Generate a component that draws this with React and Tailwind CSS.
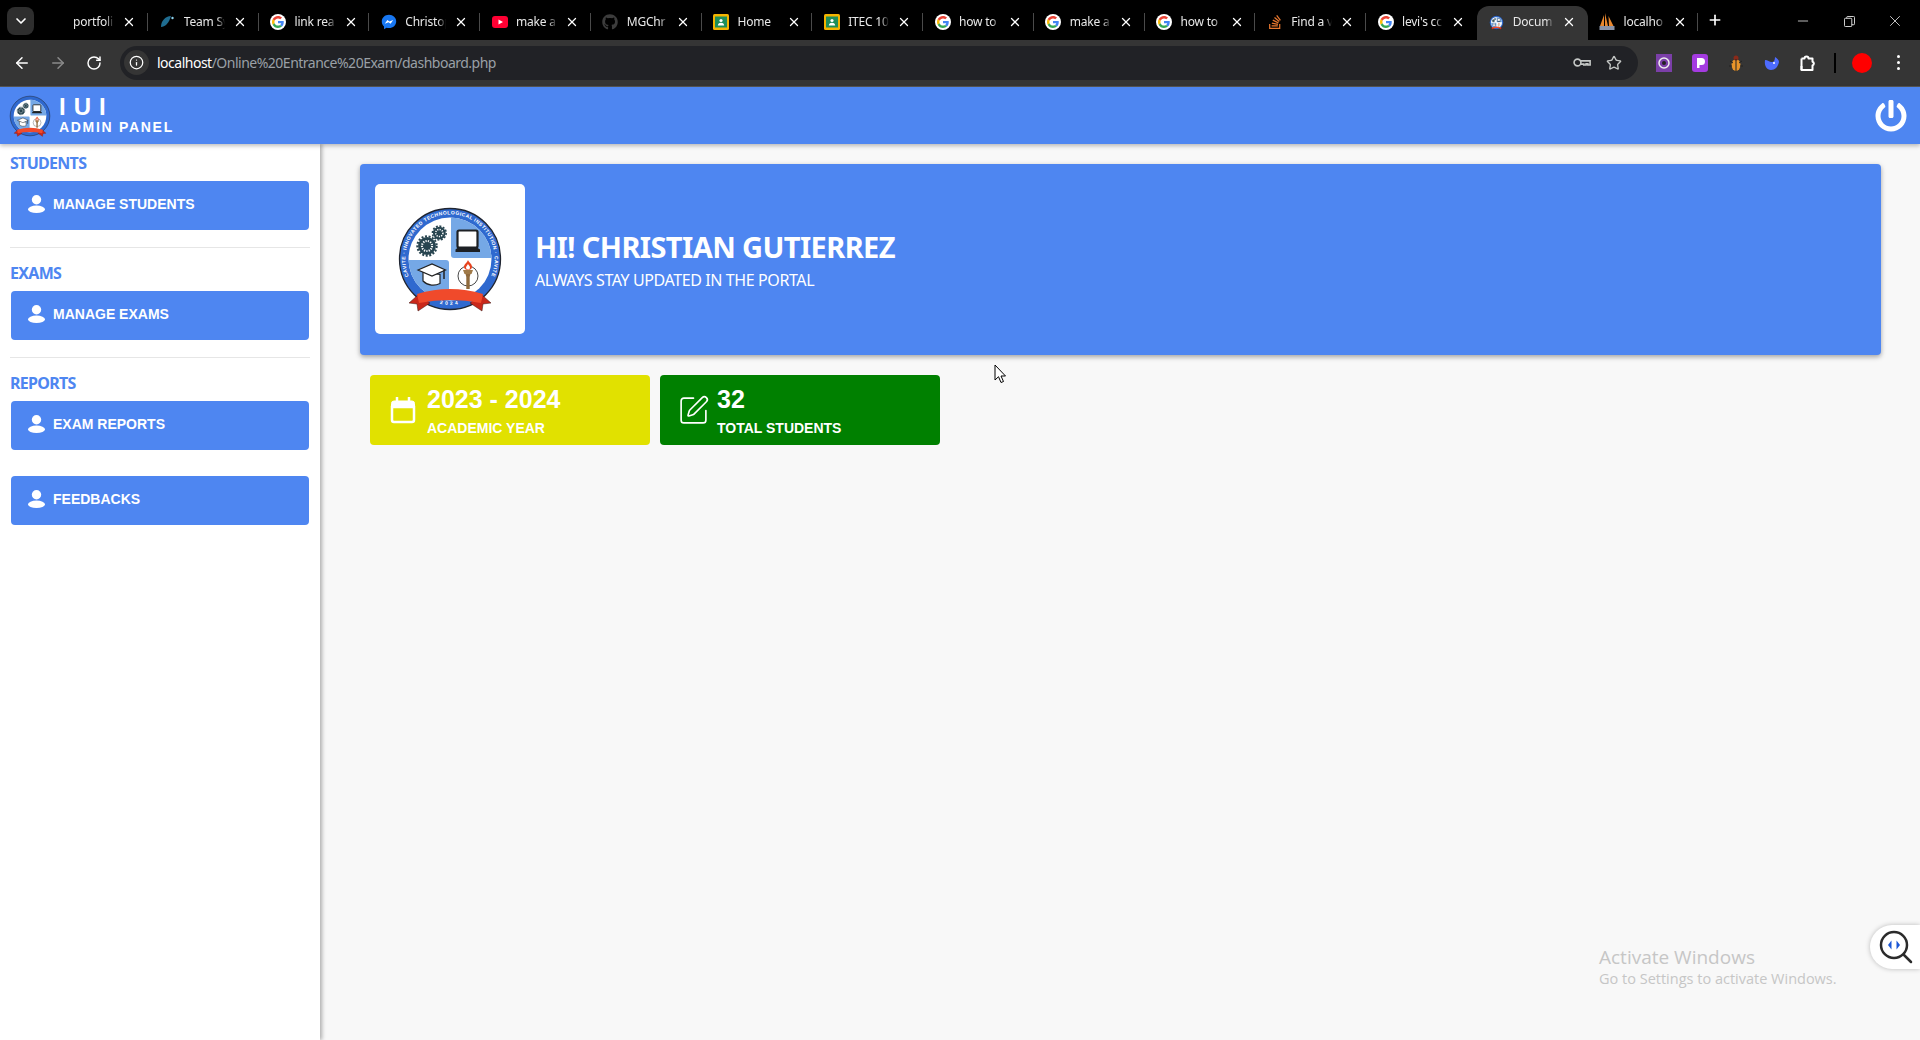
import { FaGithub, FaPowerOff, FaStackOverflow } from 'react-icons/fa';
import { ArrowLeft, ArrowRight, RotateCw, Info, Star, ChevronDown, X, Plus, Minus, SquarePen } from 'lucide-react';

const BLUE = 'bg-[#4e86f1]';

function GoogleIcon() {
  return (
    <span className="w-4 h-4 rounded-full bg-white flex items-center justify-center shrink-0">
      <svg viewBox="0 0 48 48" className="w-3 h-3">
        <path fill="#EA4335" d="M24 9.5c3.54 0 6.71 1.22 9.21 3.6l6.85-6.85C35.9 2.38 30.47 0 24 0 14.62 0 6.51 5.38 2.56 13.22l7.98 6.19C12.43 13.72 17.74 9.5 24 9.5z" />
        <path fill="#4285F4" d="M46.98 24.55c0-1.57-.15-3.09-.38-4.55H24v9.02h12.94c-.58 2.96-2.26 5.48-4.78 7.18l7.73 6c4.51-4.18 7.09-10.36 7.09-17.65z" />
        <path fill="#FBBC05" d="M10.53 28.59c-.48-1.45-.76-2.99-.76-4.59s.27-3.14.76-4.59l-7.98-6.19C.92 16.46 0 20.12 0 24c0 3.88.92 7.54 2.56 10.78l7.97-6.19z" />
        <path fill="#34A853" d="M24 48c6.48 0 11.93-2.13 15.89-5.81l-7.73-6c-2.15 1.45-4.92 2.3-8.16 2.3-6.26 0-11.57-4.22-13.47-9.91l-7.98 6.19C6.51 42.62 14.62 48 24 48z" />
      </svg>
    </span>
  );
}

function ClassroomIcon() {
  return (
    <svg viewBox="0 0 16 16" className="w-4 h-4 shrink-0">
      <rect width="16" height="16" rx="1.5" fill="#f4b400" />
      <rect x="2" y="2.5" width="12" height="11" fill="#1e8e5a" />
      <circle cx="8" cy="6.5" r="1.6" fill="#fff" />
      <path d="M4.8 11.5c.3-2 1.6-2.7 3.2-2.7s2.9.7 3.2 2.7z" fill="#fff" />
    </svg>
  );
}

function TabIcon({ type }) {
  if (type === 'google') return <GoogleIcon />;
  if (type === 'classroom') return <ClassroomIcon />;
  if (type === 'github') return <FaGithub className="w-4 h-4 shrink-0 text-[#3c3c3c]" />;
  if (type === 'stack') return <FaStackOverflow className="w-4 h-4 shrink-0 text-[#e8772e]" />;
  if (type === 'messenger')
    return (
      <svg viewBox="0 0 16 16" className="w-4 h-4 shrink-0">
        <path d="M8 .8C3.9.8.8 3.7.8 7.5c0 2 .8 3.7 2.2 4.9v2.8l2.5-1.4c.8.2 1.6.3 2.5.3 4.1 0 7.2-2.9 7.2-6.6S12.1.8 8 .8z" fill="#1877f2" />
        <path d="M3.8 9.7 6.4 6l2 1.6L12.200 6 9.600 9.800 7.600 8.200z" fill="#fff" />
      </svg>
    );
  if (type === 'youtube')
    return (
      <svg viewBox="0 0 16 16" className="w-4 h-4 shrink-0">
        <rect y="2" width="16" height="12" rx="3" fill="#ff0033" />
        <path d="M6.500 5.400v5.200L11 8z" fill="#fff" />
      </svg>
    );
  if (type === 'swoosh')
    return (
      <svg viewBox="0 0 16 16" className="w-4 h-4 shrink-0">
        <path d="M2 13C2 7 6 2.500 12 2c-1 3-2 6-4.500 8.500C6 12 4 13 2 13z" fill="#1f6c90" />
        <circle cx="13.500" cy="4" r="1.200" fill="#8fd3ee" />
      </svg>
    );
  if (type === 'logo')
    return (
      <span className="w-4 h-4 flex items-center justify-center shrink-0">
        <Logo size={15} small id="tab-logo" />
      </span>
    );
  if (type === 'sails')
    return (
      <svg viewBox="0 0 18 18" className="w-[18px] h-[18px] shrink-0">
        <path d="M2 13 6 2v11zM7 13V0l3 13zM11 13 10.500 3l5 10z" fill="#e8872e" />
        <rect x="1.500" y="13" width="15" height="4" fill="#8a93a8" />
      </svg>
    );
  return <span className="w-4 h-4 shrink-0" />;
}

const tabs = [
  { title: 'portfoli', icon: 'none' },
  { title: 'Team Sy', icon: 'swoosh' },
  { title: 'link rea', icon: 'google' },
  { title: 'Christop', icon: 'messenger' },
  { title: 'make a', icon: 'youtube' },
  { title: 'MGChr', icon: 'github' },
  { title: 'Home', icon: 'classroom' },
  { title: 'ITEC 10', icon: 'classroom' },
  { title: 'how to', icon: 'google' },
  { title: 'make a', icon: 'google' },
  { title: 'how to', icon: 'google' },
  { title: 'Find a v', icon: 'stack' },
  { title: "levi's cc", icon: 'google' },
  { title: 'Docum', icon: 'logo', active: true },
  { title: 'localho', icon: 'sails' },
];

function TabBar() {
  return (
    <div className="h-10 bg-black flex items-start shrink-0 relative">
      <div className="w-[27px] h-7 ml-[7px] mt-[7px] rounded-lg bg-[#2e2e2e] flex items-center justify-center shrink-0">
        <ChevronDown className="w-4 h-4 text-white" strokeWidth={2.5} />
      </div>
      <div className="flex ml-[3px]">
        {tabs.map((tab, i) => (
          <div
            key={i}
            className={`w-[110.750px] h-[34px] mt-[6px] flex items-center pl-[11px] pb-[2px] relative ${
              tab.active ? 'bg-[#353535] rounded-t-xl' : ''
            }`}
          >
            <div className="w-[17px] flex justify-center shrink-0">
              <TabIcon type={tab.icon} />
            </div>
            <span className="ml-[8px] w-[41px] whitespace-nowrap text-xs text-[#e8e8e8] font-['Noto_Sans',sans-serif] tracking-[-0.2px] [mask-image:linear-gradient(to_right,black_80%,transparent)]">
              {tab.title}
            </span>
            <X className="w-[14px] h-[14px] text-white ml-[8px] shrink-0" strokeWidth={2.200} />
            {!tab.active && i !== 12 && <span className="absolute right-0 top-[7px] h-[18px] w-px bg-[#4a4a4a]" />}
          </div>
        ))}
      </div>
      <Plus className="w-4 h-4 text-white mt-[12px] ml-[9px] shrink-0" strokeWidth={2.500} />
      <div className="flex items-center ml-auto mt-[12px] text-[#e8e8e8]">
        <Minus className="w-4 h-4 mr-[33px]" strokeWidth={1.200} />
        <svg viewBox="0 0 12 12" className="w-[11px] h-[11px] mr-[31px]" fill="none" stroke="currentColor">
          <rect x="0.500" y="2.500" width="8" height="9" rx="1" />
          <path d="M3 2.500V1.500a1 1 0 0 1 1-1h6.500a1 1 0 0 1 1 1v7a1 1 0 0 1-1 1H8.500" />
        </svg>
        <X className="w-[18px] h-[18px] mr-[16px]" strokeWidth={1.100} />
      </div>
    </div>
  );
}

function Toolbar() {
  return (
    <div className="h-[47px] bg-[#353535] border-b border-[#555] flex items-center shrink-0 pb-[1px]">
      <div className="w-[120px] flex items-center shrink-0">
        <ArrowLeft className="w-[18px] h-[18px] ml-[13px] text-white" strokeWidth={2} />
        <ArrowRight className="w-[18px] h-[18px] ml-[18px] text-[#8a8a8a]" strokeWidth={2} />
        <RotateCw className="w-4 h-4 ml-[19px] text-white" strokeWidth={2.200} />
      </div>
      <div className="w-[1518px] h-[34px] rounded-full bg-[#212226] flex items-center shrink-0">
        <div className="w-[25px] h-[25px] ml-1 rounded-full bg-[#353535] flex items-center justify-center shrink-0">
          <Info className="w-[15px] h-[15px] text-white" strokeWidth={2} />
        </div>
        <span className="ml-2 text-sm text-[#9aa0a6] font-['Noto_Sans',sans-serif] tracking-[-0.500px] whitespace-nowrap">
          <span className="text-white">localhost</span>/Online%20Entrance%20Exam/dashboard.php
        </span>
        <svg viewBox="0 0 20 14" className="w-[18px] h-[13px] ml-auto mr-[15px]" fill="none" stroke="#c4c7c5" strokeWidth="1.800">
          <circle cx="5" cy="7" r="3.800" />
          <path d="M8.800 5.200H19v4.600h-2.500V8.500h-2v1.300H12V8.800H8.800" />
        </svg>
        <Star className="w-4 h-4 mr-[16px] text-[#c4c7c5]" strokeWidth={2} />
      </div>
      <div className="flex items-center ml-[18px]">
        <svg viewBox="0 0 16 18" className="w-4 h-[18px]">
          <rect width="16" height="18" fill="#7b3fa8" />
          <circle cx="8" cy="9" r="5" fill="none" stroke="#eee" strokeWidth="1.500" />
          <circle cx="8" cy="9" r="2" fill="#222" />
        </svg>
        <svg viewBox="0 0 16 18" className="w-4 h-[18px] ml-5">
          <rect width="16" height="18" rx="3" fill="#a43be0" />
          <path d="M5 4h4.500a3.500 3.500 0 0 1 0 7H7.500v3H5z" fill="#fff" />
        </svg>
        <svg viewBox="0 0 16 18" className="w-4 h-[18px] ml-5">
          <ellipse cx="8" cy="11" rx="4.500" ry="6" fill="#e8942a" />
          <circle cx="8" cy="4" r="2.500" fill="#8a2a1a" />
          <path d="M8 5v12M2 7l3 2M14 7l-3 2M1 12h3M15 12h-3" stroke="#222" strokeWidth="1" />
        </svg>
        <svg viewBox="0 0 16 18" className="w-4 h-[18px] ml-5">
          <path d="M1 6c3 0 4 2 7 2 2 0 3-2 3-5 2 1 4 3 4 5-1 5-4 8-8 8-4 0-7-4-6-10z" fill="#4d6bfe" />
          <circle cx="10" cy="9" r="1" fill="#fff" />
        </svg>
        <svg viewBox="0 0 18 18" className="w-[18px] h-[18px] ml-[19px]" fill="none" stroke="#fff" strokeWidth="2" strokeLinejoin="round">
          <path d="M2.500 4.500h3a2 2 0 0 1 4 0h4v3.200a2 2 0 0 1 0 3.800v4.500h-11v-4" />
          <path d="M2.500 4.500v11.500" />
        </svg>
        <span className="w-[2px] h-5 bg-black ml-[17px]" />
        <span className="w-5 h-5 rounded-full bg-[#ff0000] ml-4" />
        <span className="flex flex-col gap-[3px] ml-[25px]">
          <span className="w-[3px] h-[3px] rounded-full bg-white" />
          <span className="w-[3px] h-[3px] rounded-full bg-white" />
          <span className="w-[3px] h-[3px] rounded-full bg-white" />
        </span>
      </div>
    </div>
  );
}

function Gear({ x, y, r }) {
  return (
    <g>
      <circle cx={x} cy={y} r={r * 0.85} fill="#27444f" />
      <circle cx={x} cy={y} r={r * 0.92} fill="none" stroke="#27444f" strokeWidth={r * 0.2} strokeDasharray="2 1.600" />
      <circle cx={x} cy={y} r={r * 0.48} fill="none" stroke="#fff" strokeWidth={r * 0.2} strokeDasharray="1.200 1.200" />
    </g>
  );
}

// school seal, small = no lettering for the header and tab versions
function Logo({ size, small, id }) {
  return (
    <svg viewBox="-56 -56 112 112" width={size} height={size} className="shrink-0">
      <defs>
        <clipPath id={`${id}-clip`}>
          <circle r="41.500" />
        </clipPath>
        <path id={`${id}-arc`} d="M -37 25 A 44.650 44.650 0 1 1 37 25" />
        <path id={`${id}-low`} d="M -25 38.500 A 46 46 0 0 0 25 38.500" />
      </defs>
      <circle r="50.500" fill="#2f69cf" stroke="#1f2430" strokeWidth="1.300" />
      {!small && (
        <text fill="#fff" fontSize="5" fontWeight="700" letterSpacing="0.450" fontFamily="'Liberation Sans', sans-serif">
          <textPath href={`#${id}-arc`} startOffset="50%" textAnchor="middle">
            CAVITE · INNOVATED  TECHNOLOGICAL  INSTITUTION · CAVITE
          </textPath>
        </text>
      )}
      <circle r="41.500" fill="#fff" />
      <g clipPath={`url(#${id}-clip)`}>
        <rect x="1" y="-43" width="43" height="42" rx="3" fill="#75a8e6" />
        <rect x="-44" y="1" width="43" height="43" rx="3" fill="#75a8e6" />
      </g>
      <Gear x={-23} y={-13} r={10.500} />
      <Gear x={-10.700} y={-26} r={7.500} />
      <rect x="7.500" y="-28.500" width="20" height="17" rx="1.500" fill="#fff" stroke="#1d2024" strokeWidth="2.200" />
      <path d="M5.500 -9.500 8 -11.500h19l3 2v2.500H5.500z" fill="#1d2024" />
      <path d="M-27 13v9c5 5 12 5 17 2.500v-9z" fill="#fff" stroke="#222" strokeWidth="1.200" />
      <path d="M-32 11-18 5-4.500 11-18 17z" fill="#fff" stroke="#222" strokeWidth="1.200" />
      <path d="M-6 11v9" stroke="#222" strokeWidth="1.500" />
      <circle cx="18" cy="17" r="10" fill="none" stroke="#333" strokeWidth="0.900" />
      <path d="M15.500 15h5l-.8 3v12h-3.400V18z" fill="#8f6a3c" />
      <path d="M13 11h10l-1.500 4h-7z" fill="#a07a48" />
      <path d="M18 1c1 2.500 4 3.500 4 7 0 2-2 3-4 3s-4-1-4-3c0-3 3-4 4-7z" fill="#e8431f" />
      <path d="M18 5c.8 1.500 2 2 2 3.500S19 10.500 18 10.500 16 9.500 16 8.500 17.200 6.500 18 5z" fill="#fff" />
      {!small && (
        <text fill="#fff" fontSize="5" fontWeight="700" letterSpacing="2.300" fontFamily="'Liberation Sans', sans-serif">
          <textPath href={`#${id}-low`} startOffset="50%" textAnchor="middle">
            2024
          </textPath>
        </text>
      )}
      <path d="M-32 36-41 44-33 45-32 52-20 44z" fill="#c9281a" stroke="#3a1410" strokeWidth="0.500" />
      <path d="M32 36 41 44 33 45 32 52 20 44z" fill="#c9281a" stroke="#3a1410" strokeWidth="0.500" />
      <path d="M-33 35Q0 25 33 35L31 44Q0 38-31 44z" fill="#f04a2b" />
    </svg>
  );
}

function UserIcon() {
  return (
    <svg viewBox="0 0 17 18" className="w-[17px] h-[18px] shrink-0" fill="#fff">
      <circle cx="8.500" cy="4.700" r="4.700" />
      <ellipse cx="8.500" cy="14.300" rx="8.500" ry="3.700" />
    </svg>
  );
}

function SideButton({ label, className = '' }) {
  return (
    <button className={`w-[298px] h-[49px] ${BLUE} rounded-[4px] flex items-center pl-[17px] pb-[4px] text-left ${className}`}>
      <UserIcon />
      <span className="ml-2 text-white text-sm font-bold font-['Liberation_Sans',sans-serif] whitespace-nowrap">{label}</span>
    </button>
  );
}

function SideHeading({ children, className = '' }) {
  return (
    <h3 className={`h-[23px] leading-[22px] mb-[6px] -ml-px text-[#4e86f1] text-base font-bold font-['Noto_Sans',sans-serif] tracking-[-0.700px] ${className}`}>
      {children}
    </h3>
  );
}

function Sidebar() {
  return (
    <aside className="w-[320px] shrink-0 bg-white pt-2 px-[11px] shadow-[2px_0_4px_rgba(0,0,0,0.3)] z-10">
      <SideHeading>STUDENTS</SideHeading>
      <SideButton label="MANAGE STUDENTS" />
      <hr className="mt-[17px] mb-[14px] -ml-px w-[300px] border-t border-[#e6e6e6]" />
      <SideHeading>EXAMS</SideHeading>
      <SideButton label="MANAGE EXAMS" />
      <hr className="mt-[17px] mb-[14px] -ml-px w-[300px] border-t border-[#e6e6e6]" />
      <SideHeading>REPORTS</SideHeading>
      <SideButton label="EXAM REPORTS" />
      <SideButton label="FEEDBACKS" className="mt-[26px]" />
    </aside>
  );
}

function StatCard({ color, icon, value, label }) {
  return (
    <div className={`w-[280px] h-[70px] rounded-[4px] ${color} flex items-start text-white`}>
      <div className="w-[57px] h-full flex items-center justify-center pt-[1px] pl-[9px] shrink-0">{icon}</div>
      <div className="font-['Liberation_Sans',sans-serif] font-bold">
        <div className="text-[25px] leading-[29px] mt-[10px]">{value}</div>
        <div className="text-sm leading-4 mt-[6px]">{label}</div>
      </div>
    </div>
  );
}

export default function App() {
  return (
    <div className="h-[1040px] w-full overflow-hidden flex flex-col relative bg-[#f8f8f8]">
      <TabBar />
      <Toolbar />
      <header className={`h-[57px] ${BLUE} flex items-center shrink-0 pl-[8px] pr-[13px] z-20 shadow-[0_2px_4px_rgba(0,0,0,0.25)]`}>
        <Logo size={44} small id="head-logo" />
        <div className="ml-[7px] text-white font-['Liberation_Sans',sans-serif] font-bold">
          <div className="text-2xl leading-[24px] tracking-[8px]">IUI</div>
          <div className="text-sm leading-[17px] tracking-[1.700px]">ADMIN PANEL</div>
        </div>
        <FaPowerOff className="ml-auto w-8 h-8 text-white" />
      </header>
      <div className="flex flex-1 min-h-0">
        <Sidebar />
        <main className="flex-1 pt-5 pl-10 pr-[39px]">
          <section className={`h-[191px] ${BLUE} rounded-[4px] flex items-center pl-[15px] pb-[1px] shadow-[0_2px_5px_rgba(0,0,0,0.35)]`}>
            <div className="w-[150px] h-[150px] bg-white rounded-[5px] flex items-center justify-center shrink-0">
              <Logo size={112} id="card-logo" />
            </div>
            <div className="ml-[10px] text-white font-['Noto_Sans',sans-serif]">
              <h1 className="text-[29px] leading-[36px] font-bold tracking-[-0.600px]">HI! CHRISTIAN GUTIERREZ</h1>
              <p className="text-base leading-5 mt-[5px] tracking-[-0.400px]">ALWAYS STAY UPDATED IN THE PORTAL</p>
            </div>
          </section>
          <div className="flex gap-[10px] pl-[10px] mt-5">
            <StatCard
              color="bg-[#e1e100]"
              value="2023 - 2024"
              label="ACADEMIC YEAR"
              icon={
                <svg viewBox="0 0 26 27" className="w-[26px] h-[27px]" fill="#fff" stroke="#fff">
                  <path d="M2 10h22v13a2 2 0 0 1-2 2H4a2 2 0 0 1-2-2z" fill="none" strokeWidth="2.500" />
                  <path d="M4 4h18a2.500 2.500 0 0 1 2.500 2.500V10h-23V6.500A2.500 2.500 0 0 1 4 4z" strokeWidth="1" />
                  <path d="M7 .500v5M19 .500v5" strokeWidth="2.500" strokeLinecap="round" />
                </svg>
              }
            />
            <StatCard
              color="bg-[#008000]"
              value="32"
              label="TOTAL STUDENTS"
              icon={<SquarePen className="w-[33px] h-[33px] text-white" strokeWidth={1.200} />}
            />
          </div>
        </main>
      </div>

      {/* things lying over the page */}
      <svg viewBox="0 0 12 20" className="absolute left-[994px] top-[364px] w-3 h-5 z-30">
        <path d="M1 1v15l3.500-3.300L7 18.500l2.500-1-2.500-5.500h4.500z" fill="#fff" stroke="#000" strokeWidth="1" />
      </svg>
      <div className="absolute left-[1599px] top-[945px] font-['Open_Sans',sans-serif] text-[#c6c6c6] whitespace-nowrap">
        <div className="text-[19px] leading-6">Activate Windows</div>
        <div className="text-[14.500px] leading-[20px]">Go to Settings to activate Windows.</div>
      </div>
      <div className="absolute right-0 top-[925px] w-[50px] h-[44px] rounded-l-[22px] bg-white shadow-[0_0_5px_rgba(0,0,0,0.25)] flex items-center pl-[9px] z-30">
        <svg viewBox="0 0 34 34" className="w-[34px] h-[34px]" fill="none">
          <circle cx="15" cy="15" r="13" stroke="#2b2b2b" strokeWidth="2.500" />
          <path d="M25 25l7 7" stroke="#2b2b2b" strokeWidth="2.500" strokeLinecap="round" />
          <path d="M12.500 10.500 9 15l3.500 4.500z" fill="#1a56d6" />
          <path d="M17.500 10.500 21 15l-3.500 4.500z" fill="#1a56d6" />
        </svg>
      </div>
    </div>
  );
}
